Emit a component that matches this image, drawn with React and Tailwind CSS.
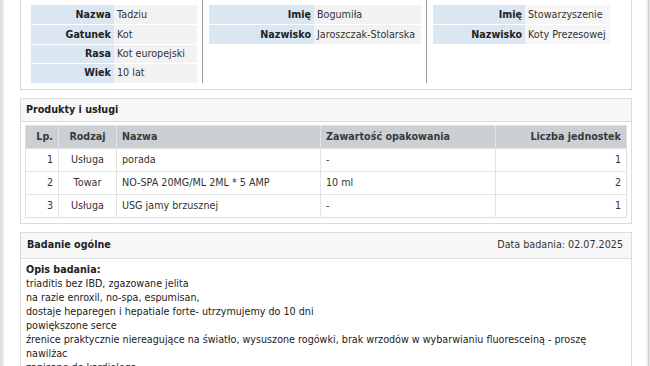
import React from "react";

const font = { fontFamily: '"DejaVu Sans", Verdana, sans-serif' };

function InfoTable({ rows, lw, vw, valueBg }) {
  return (
    <div className="flex flex-col">
      {rows.map(([l, v], i) => (
        <div key={i} className={`flex h-[19.4px] ${i > 0 ? "border-t border-white" : ""}`}>
          <div className={`${lw} bg-[#dae7f3] text-right pr-[3px] font-bold text-[#222] flex items-center justify-end`}>{l}</div>
          <div className={`${vw} ${valueBg} pl-[3px] text-[#333] flex items-center`}>{v}</div>
        </div>
      ))}
    </div>
  );
}

const products = [
  ["1", "Usługa", "porada", "-", "1"],
  ["2", "Towar", "NO-SPA 20MG/ML 2ML * 5 AMP", "10 ml", "2"],
  ["3", "Usługa", "USG jamy brzusznej", "-", "1"],
];

const lines = [
  "triaditis bez IBD, zgazowane jelita",
  "na razie enroxil, no-spa, espumisan,",
  "dostaje heparegen i hepatiale forte- utrzymujemy do 10 dni",
  "powiększone serce",
  "źrenice praktycznie niereagujące na światło, wysuszone rogówki, brak wrzodów w wybarwianiu fluoresceiną - proszę nawilżac",
  "zapisano do kardiologa",
];

export default function App() {
  return (
    <div className="w-[650px] h-[366px] overflow-hidden flex bg-white text-[9.6px] leading-[14px]" style={font}>
      <div className="w-[4px] shrink-0 bg-gradient-to-r from-[#dcdcdc] to-[#f0f0f0]" />
      <div className="flex-1 pl-[16px] pr-[14px] flex flex-col gap-[8px]">
        {/* Top panel (cut off) */}
        <div className="border-x border-b border-[#d9d9d9] pb-[6px] flex">
          <div className="w-[182px] pl-[10px] pr-[5px] pt-[5px] border-r border-[#9a9a9a]">
            <InfoTable
              lw="w-[83px]"
              vw="w-[83px]"
              valueBg="bg-[#f2f2f2]"
              rows={[["Nazwa", "Tadziu"], ["Gatunek", "Kot"], ["Rasa", "Kot europejski"], ["Wiek", "10 lat"]]}
            />
          </div>
          <div className="w-[224px] pl-[6px] pr-[5px] pt-[5px] border-r border-[#9a9a9a]">
            <InfoTable
              lw="w-[105px]"
              vw="w-[107px]"
              valueBg="bg-[#f2f2f2]"
              rows={[["Imię", "Bogumiła"], ["Nazwisko", "Jaroszczak-Stolarska"]]}
            />
          </div>
          <div className="flex-1 pl-[6px] pt-[5px]">
            <InfoTable
              lw="w-[92px]"
              vw="w-[85px]"
              valueBg="bg-[#f6f6f6]"
              rows={[["Imię", "Stowarzyszenie"], ["Nazwisko", "Koty Prezesowej"]]}
            />
          </div>
        </div>

        {/* Produkty i usługi */}
        <div className="border border-[#dcdcdc]">
          <div className="h-[23px] bg-[#f7f7f7] border-b border-[#dcdcdc] pl-[5px] flex items-center font-bold text-[#222]">
            Produkty i usługi
          </div>
          <div className="pt-[3px] pb-[5px] px-[4px]">
            <table className="w-[601px] border-collapse border border-[#dedede] table-fixed">
              <colgroup>
                <col className="w-[33px]" />
                <col className="w-[58px]" />
                <col className="w-[204px]" />
                <col className="w-[175px]" />
                <col className="w-[131px]" />
              </colgroup>
              <thead>
                <tr className="h-[23px] bg-[#cbd0d4] text-[#3a3a3a] font-bold">
                  <th className="text-right pr-[5px] font-bold border-r border-[#e2e5e8]">Lp.</th>
                  <th className="text-center font-bold border-r border-[#e2e5e8]">Rodzaj</th>
                  <th className="text-left pl-[5px] font-bold border-r border-[#e2e5e8]">Nazwa</th>
                  <th className="text-left pl-[5px] font-bold border-r border-[#e2e5e8]">Zawartość opakowania</th>
                  <th className="text-right pr-[5px] font-bold">Liczba jednostek</th>
                </tr>
              </thead>
              <tbody className="text-[#333]">
                {products.map((r, i) => (
                  <tr key={i} className="h-[23px] border-t border-[#e3e3e3]">
                    <td className="text-right pr-[5px] border-r border-[#e3e3e3]">{r[0]}</td>
                    <td className="text-center border-r border-[#e3e3e3]">{r[1]}</td>
                    <td className="pl-[5px] border-r border-[#e3e3e3]">{r[2]}</td>
                    <td className="pl-[5px] border-r border-[#e3e3e3]">{r[3]}</td>
                    <td className="text-right pr-[5px]">{r[4]}</td>
                  </tr>
                ))}
              </tbody>
            </table>
          </div>
        </div>

        {/* Badanie ogólne */}
        <div className="border border-[#dcdcdc]">
          <div className="h-[26px] bg-[#f7f7f7] border-b border-[#dcdcdc] pl-[6px] pr-[8px] flex items-center justify-between">
            <span className="font-bold text-[#222]">Badanie ogólne</span>
            <span className="text-[#333]">Data badania: 02.07.2025</span>
          </div>
          <div className="pl-[5px] pr-[20px] pt-[4px] text-[#222]">
            <div className="font-bold">Opis badania:</div>
            {lines.map((l, i) => (
              <div key={i}>{l}</div>
            ))}
          </div>
        </div>
      </div>
      <div className="w-[6px] shrink-0 flex">
        <div className="w-[2px] bg-[#f0f0f0]" />
        <div className="w-[1px] bg-[#cfcfcf]" />
        <div className="flex-1 bg-[#e8e8e8]" />
      </div>
    </div>
  );
}
